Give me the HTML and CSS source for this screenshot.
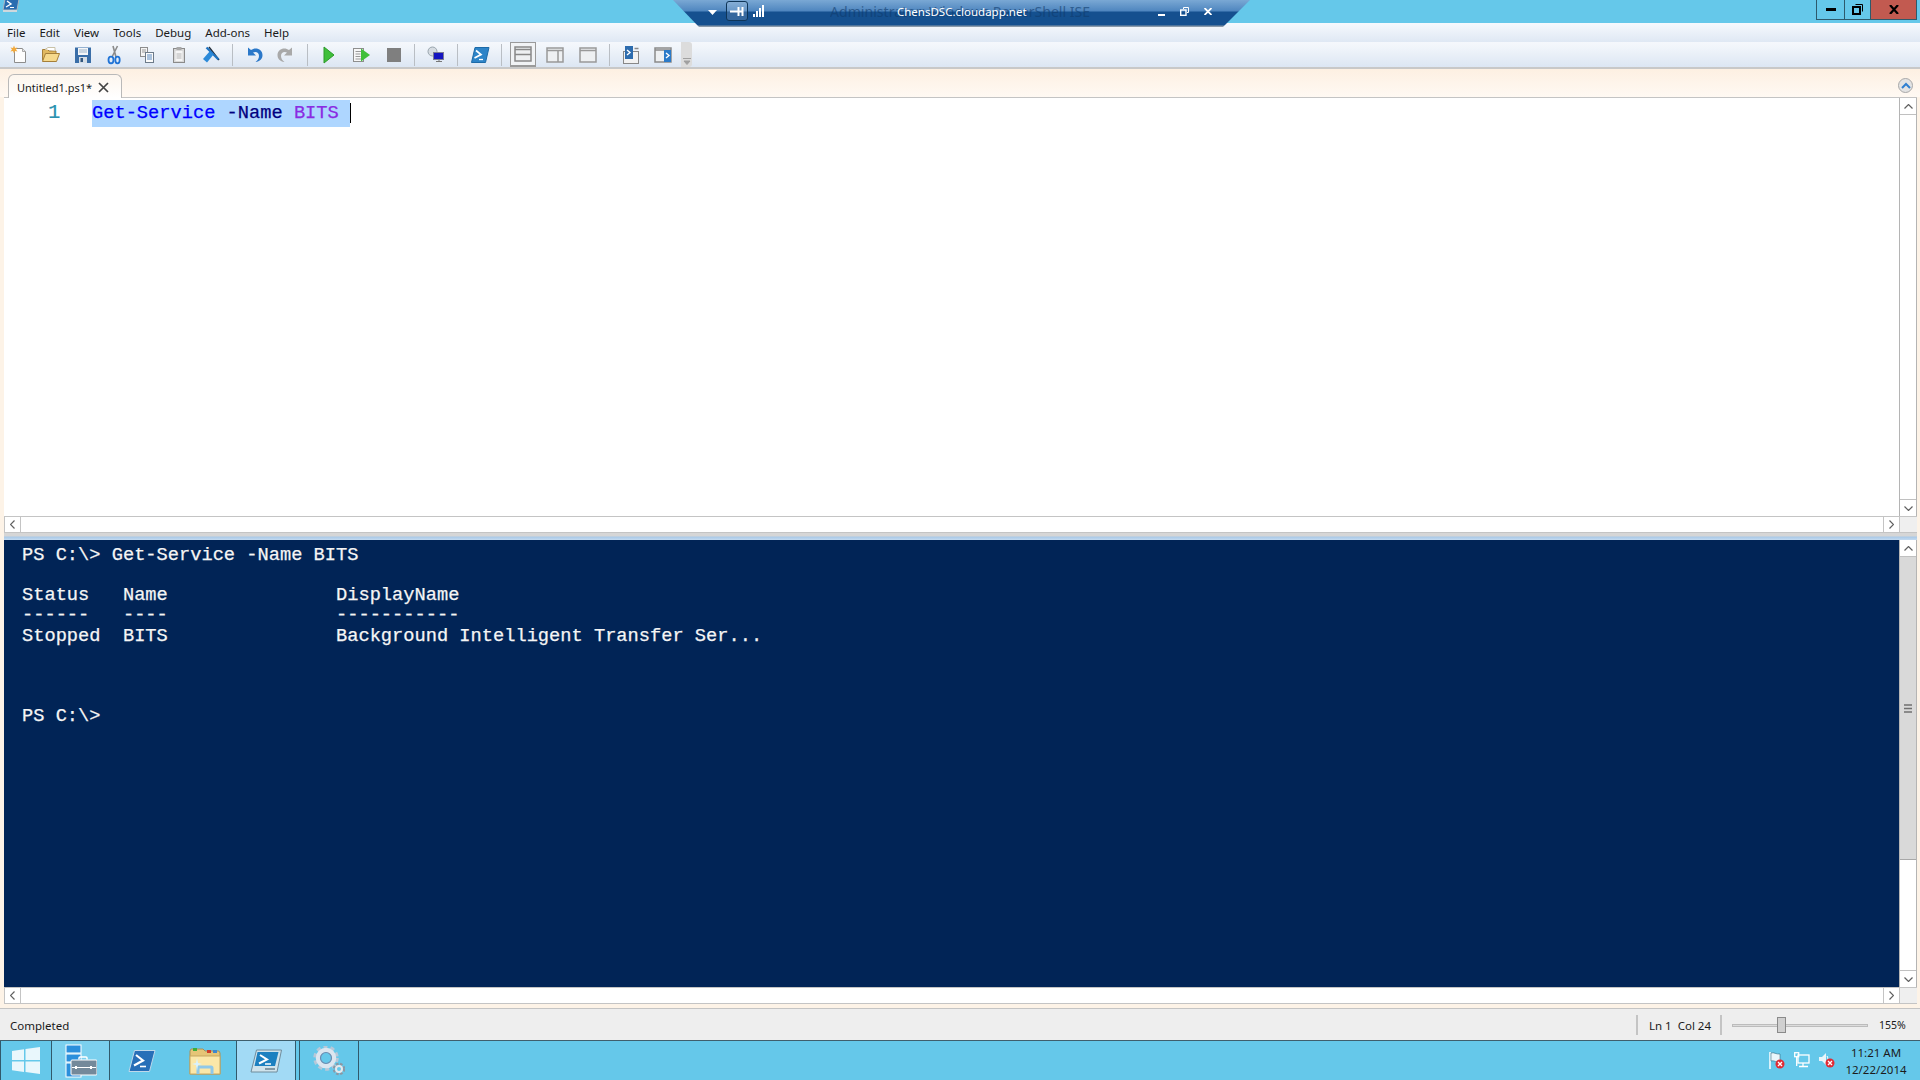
FILE: index.html
```html
<!DOCTYPE html>
<html lang="en">
<head>
<meta charset="utf-8">
<title>Windows PowerShell ISE</title>
<link rel="stylesheet" href="styles.css">
</head>
<body>
<div class="window">
  <header class="titlebar">
    <svg class="app-icon" width="18" height="15" viewBox="0 0 18 15"><path d="M3 1h14l-2 11H1z" fill="#2a6db0" stroke="#a9b6c0"/><path d="M5 3l4 3-5 3" fill="none" stroke="#fff" stroke-width="1.4"/><path d="M8 9.500h4" stroke="#fff"/><rect x="1" y="12" width="14" height="2" fill="#cfd8dd"/></svg>
    <div class="win-controls">
      <div class="win-btn min"><svg width="10" height="3"><rect width="10" height="3" fill="#000"/></svg></div>
      <div class="win-btn restore"><svg width="11" height="11" viewBox="0 0 11 11"><path d="M3.500.500h7v7" fill="none" stroke="#000"/><rect x="1" y="3" width="7" height="7" fill="none" stroke="#000" stroke-width="2"/></svg></div>
      <div class="win-btn close"><svg width="10" height="9" viewBox="0 0 10 9"><path d="M1 0l8 9M9 0L1 9" stroke="#000" stroke-width="2.200"/></svg></div>
    </div>
  </header>

  <div class="connbar">
    <span class="conn-ghost">Administrator: Windows PowerShell ISE</span>
    <svg class="conn-drop" width="9" height="5"><path d="M0 0h9L4.500 5z" fill="#fff"/></svg>
    <div class="conn-pin"><svg width="15" height="11" viewBox="0 0 15 11"><path d="M0 5.500h8M8.500 1v9M12.500 1v9M8 5.500h5" stroke="#fff" stroke-width="2"/></svg></div>
    <svg class="conn-signal" width="11" height="12" viewBox="0 0 11 12"><path d="M0 9h2v3H0zM3 6h2v6H3zM6 3h2v9H6zM9 0h2v12H9z" fill="#fff"/></svg>
    <span class="conn-name">ChensDSC.cloudapp.net</span>
    <svg class="conn-min" width="7" height="2"><rect width="7" height="2" fill="#fff"/></svg>
    <svg class="conn-restore" width="9" height="9" viewBox="0 0 9 9"><path d="M3.500 2V.500h5v5H7" fill="none" stroke="#fff"/><rect x=".7" y="3" width="5.300" height="5.300" fill="none" stroke="#fff" stroke-width="1.400"/></svg>
    <svg class="conn-close" width="8" height="7" viewBox="0 0 8 7"><path d="M.5 0l7 7M7.500 0l-7 7" stroke="#fff" stroke-width="1.800"/></svg>
  </div>

  <nav class="menubar">
    <span class="menu-item">File</span><span class="menu-item">Edit</span><span class="menu-item">View</span><span class="menu-item">Tools</span><span class="menu-item">Debug</span><span class="menu-item">Add-ons</span><span class="menu-item">Help</span>
  </nav>

  <div class="toolbar">
    <div class="tool"><svg width="20" height="20" viewBox="0 0 20 20"><path d="M5.500 3.500h8l3 3v11h-11z" fill="#fdfdfd" stroke="#8d8d8d"/><path d="M13.500 3.500v3h3" fill="#e4e4e4" stroke="#a8a8a8"/><path d="M5 .5l1 2.500 2.500-.5-1.500 2 1.500 2-2.500-.5-1 2.500-1-2.500-2.500.5 1.500-2-1.500-2 2.500.5z" fill="#f2a93b"/></svg></div>
    <div class="tool"><svg width="20" height="20" viewBox="0 0 20 20"><path d="M1.500 15.500v-11h5l1.500 1.500h7v2" fill="#e0b860" stroke="#a57f3a"/><path d="M1.500 16.500l3-8h14l-3 8z" fill="#f6d98c" stroke="#a57f3a"/><path d="M4 4.500l3-2h7v3" fill="#fff" stroke="#c9c2a8"/></svg></div>
    <div class="tool"><svg width="20" height="20" viewBox="0 0 20 20"><path d="M2 2.500h16v15.500H2z" fill="#3a6ea8"/><rect x="5" y="3" width="10" height="7" fill="#f4f6f8"/><path d="M6 5h8M6 7h8" stroke="#9fb4c8"/><rect x="6" y="12" width="8" height="6" fill="#d5dde5"/><rect x="7.500" y="13" width="2.500" height="4" fill="#33577f"/></svg></div>
    <div class="tool"><svg width="20" height="20" viewBox="0 0 20 20"><path d="M12.500 1L7 12M8 1l3 11" stroke="#8b8b8b" stroke-width="1.600" fill="none"/><ellipse cx="6" cy="15" rx="2.500" ry="3.300" fill="none" stroke="#1f73d6" stroke-width="1.800"/><ellipse cx="12.500" cy="15" rx="2.200" ry="3.300" fill="none" stroke="#1f73d6" stroke-width="1.800"/></svg></div>
    <div class="tool"><svg width="20" height="20" viewBox="0 0 20 20"><rect x="3.500" y="2.500" width="7" height="9" fill="#f4f4f4" stroke="#8d8d8d"/><path d="M5 5h4M5 7h4" stroke="#999"/><rect x="8.500" y="7.500" width="8" height="10" fill="#fbfbfb" stroke="#6d7b8a"/><path d="M10 10h5M10 12h5M10 14h5" stroke="#5b8ac0"/></svg></div>
    <div class="tool"><svg width="20" height="20" viewBox="0 0 20 20"><rect x="4.500" y="3.500" width="11" height="14" fill="#d8d8d8" stroke="#8a8a8a"/><rect x="6.500" y="6" width="7" height="10" fill="#f5f5f5"/><rect x="7.500" y="2" width="5" height="3" fill="#a8a8a8"/><path d="M7.500 9h5M7.500 11h5M7.500 13h5" stroke="#b5b5b5"/></svg></div>
    <div class="tool"><svg width="20" height="20" viewBox="0 0 20 20"><path d="M8 2l10 13" stroke="#222c38" stroke-width="1.400"/><path d="M5.500 2.500l12 12" stroke="#1f73c0" stroke-width="2.300"/><path d="M9 6l-7 8 4 3.500 6.500-8z" fill="#2b8ad9"/></svg></div>
    <div class="tsep"></div>
    <div class="tool"><svg width="20" height="20" viewBox="0 0 20 20"><path d="M4 2.500v8h8L9 7.500c3-1.500 6 0 6 3.500 0 2.500-1.500 4.500-3.500 6 4.500-.5 7-3 7-7 0-6-7-8.500-11.500-5L4 2.500z" fill="#2b78c9"/></svg></div>
    <div class="tool"><svg width="20" height="20" viewBox="0 0 20 20"><path d="M16 2.500v8H8l3-3c-3-1.500-6 0-6 3.500 0 2.500 1.500 4.500 3.500 6-4.500-.5-7-3-7-7 0-6 7-8.500 11.500-5z" fill="#a9a9a9"/></svg></div>
    <div class="tsep"></div>
    <div class="tool"><svg width="20" height="20" viewBox="0 0 20 20"><path d="M5 2l10 8-10 8z" fill="#3fbf3a" stroke="#2c9a2a"/></svg></div>
    <div class="tool"><svg width="20" height="20" viewBox="0 0 20 20"><rect x="2.500" y="3.500" width="10" height="13" fill="#f7f7f7" stroke="#8f8f8f"/><path d="M4.500 6.500h6M4.500 9h5M4.500 11.500h5M4.500 14h6" stroke="#999"/><path d="M10 3.500l9 6.500-9 6.500z" fill="#3fbf3a"/></svg></div>
    <div class="tool"><svg width="20" height="20" viewBox="0 0 20 20"><rect x="4" y="3" width="14" height="14" fill="#7f7f7f"/></svg></div>
    <div class="tsep"></div>
    <div class="tool"><svg width="20" height="20" viewBox="0 0 20 20"><circle cx="6.500" cy="6.500" r="4.500" fill="#d6dce2" stroke="#98a4ad"/><rect x="7.500" y="7.500" width="10" height="7" fill="#1414c0" stroke="#7c7c94"/><path d="M10 16.500h6M13 15v2" stroke="#777"/></svg></div>
    <div class="tsep"></div>
    <div class="tool shifted"><svg width="20" height="20" viewBox="0 0 20 20"><path d="M5 2.500h14l-3.500 15H1.500z" fill="#2d84c8" stroke="#1c6aa8"/><path d="M6 5.500l5 4-6.500 3.500" fill="none" stroke="#fff" stroke-width="1.700"/><path d="M9 14.500h4" stroke="#fff" stroke-width="1.300"/></svg></div>
    <div class="tsep"></div>
    <div class="tool selected"><svg width="18" height="16" viewBox="0 0 18 16"><rect x="1" y="1" width="16" height="14" fill="#eef0f2" stroke="#888" stroke-width="1.500"/><path d="M1 3.500h16M1 8.500h16" stroke="#888" stroke-width="1.500"/></svg></div>
    <div class="tool"><svg width="18" height="16" viewBox="0 0 18 16"><rect x="1" y="1" width="16" height="14" fill="#eef0f2" stroke="#999" stroke-width="1.500"/><path d="M1 3.500h16M12 3v12" stroke="#999" stroke-width="1.500"/></svg></div>
    <div class="tool wide"><svg width="18" height="16" viewBox="0 0 18 16"><rect x="1" y="1" width="16" height="14" fill="#eef0f2" stroke="#999" stroke-width="1.500"/><path d="M1 3.500h16" stroke="#999" stroke-width="1.500"/></svg></div>
    <div class="tsep"></div>
    <div class="tool"><svg width="18" height="20" viewBox="0 0 18 20"><rect x="1.500" y="6.500" width="15" height="12" fill="#f2f2f2" stroke="#888"/><rect x="3" y="1" width="8" height="13" fill="#2d6cae"/><path d="M5 5l3 2.500-3 2.500" fill="none" stroke="#fff" stroke-width="1.400"/><path d="M12.500 3.500h4" stroke="#888" stroke-width="1.500"/></svg></div>
    <div class="tool"><svg width="18" height="16" viewBox="0 0 18 16"><rect x="1" y="1" width="16" height="14" fill="#eef0f2" stroke="#8a8a8a" stroke-width="1.500"/><path d="M1 3h16" stroke="#8a8a8a" stroke-width="1.500"/><rect x="10" y="3" width="7" height="12" fill="#2b7ac8"/><path d="M12 6l3 2.500-3 2.500" fill="none" stroke="#fff" stroke-width="1.400"/></svg></div>
    <div class="overflow"><svg width="8" height="8" viewBox="0 0 8 8"><path d="M0 1.500h8M1 4h6l-3 3.500z" stroke="#a0a0a0" fill="#a0a0a0"/></svg></div>
  </div>

  <div class="tabstrip">
    <div class="tab"><span>Untitled1.ps1*</span><svg width="11" height="11" viewBox="0 0 11 11"><path d="M1 1l9 9M10 1l-9 9" stroke="#444" stroke-width="1.700"/></svg></div>
    <div class="collapse"><svg width="10" height="7" viewBox="0 0 10 7"><path d="M1 6l4-4 4 4" fill="none" stroke="#2f7fd1" stroke-width="2"/></svg></div>
  </div>

  <main class="panes">
    <section class="pane editor-pane">
      <div class="pane-body">
        <div class="editor">
          <span class="gutter">1</span>
          <pre class="code"><span class="sel"><span class="cmd">Get-Service</span> <span class="param">-Name</span> <span class="arg">BITS</span> </span><span class="caret"></span></pre>
        </div>
        <div class="vscroll">
          <div class="sb-btn"><svg width="9" height="5" viewBox="0 0 9 5"><path d="M.5 4.500l4-4 4 4" fill="none" stroke="#606060" stroke-width="1.200"/></svg></div>
          <div class="sb-track"></div>
          <div class="sb-btn"><svg width="9" height="5" viewBox="0 0 9 5"><path d="M.5.500l4 4 4-4" fill="none" stroke="#606060" stroke-width="1.200"/></svg></div>
        </div>
      </div>
      <div class="hscroll">
        <div class="hs-btn"><svg width="5" height="9" viewBox="0 0 5 9"><path d="M4.500.5l-4 4 4 4" fill="none" stroke="#606060" stroke-width="1.200"/></svg></div>
        <div class="hs-track"></div>
        <div class="hs-btn"><svg width="5" height="9" viewBox="0 0 5 9"><path d="M.5.5l4 4-4 4" fill="none" stroke="#606060" stroke-width="1.200"/></svg></div>
        <div class="hs-corner"></div>
      </div>
    </section>
    <div class="splitter"></div>
    <section class="pane console-pane">
      <div class="pane-body">
        <pre class="console">PS C:\&gt; Get-Service -Name BITS

Status   Name               DisplayName
------   ----               -----------
Stopped  BITS               Background Intelligent Transfer Ser...



PS C:\&gt;</pre>
        <div class="vscroll">
          <div class="sb-btn"><svg width="9" height="5" viewBox="0 0 9 5"><path d="M.5 4.500l4-4 4 4" fill="none" stroke="#606060" stroke-width="1.200"/></svg></div>
          <div class="sb-thumb"><svg width="8" height="9" viewBox="0 0 8 9"><path d="M0 1h8M0 4.500h8M0 8h8" stroke="#707070" stroke-width="1.500"/></svg></div>
          <div class="sb-track"></div>
          <div class="sb-btn"><svg width="9" height="5" viewBox="0 0 9 5"><path d="M.5.500l4 4 4-4" fill="none" stroke="#606060" stroke-width="1.200"/></svg></div>
        </div>
      </div>
      <div class="hscroll">
        <div class="hs-btn"><svg width="5" height="9" viewBox="0 0 5 9"><path d="M4.500.5l-4 4 4 4" fill="none" stroke="#606060" stroke-width="1.200"/></svg></div>
        <div class="hs-track"></div>
        <div class="hs-btn"><svg width="5" height="9" viewBox="0 0 5 9"><path d="M.5.5l4 4-4 4" fill="none" stroke="#606060" stroke-width="1.200"/></svg></div>
        <div class="hs-corner"></div>
      </div>
    </section>
  </main>

  <footer class="statusbar">
    <span class="status-text">Completed</span>
    <span class="status-pos">Ln 1&nbsp; Col 24</span>
    <div class="slider"><div class="slider-thumb"></div></div>
    <span class="zoom-text">155%</span>
  </footer>

  <div class="taskbar">
    <div class="task start"><svg width="28" height="27" viewBox="0 0 28 27"><path d="M0 4l12-1.700V13H0zM13.500 2L28 0v13H13.500zM0 14.500h12v10.400L0 23.300zM13.500 14.500H28V27l-14.500-2z" fill="#e9f7fc"/></svg></div>
    <div class="task server"><svg width="32" height="34" viewBox="0 0 32 34"><rect x="1" y="1" width="15" height="8" fill="#2a8fdc" stroke="#fff"/><rect x="1" y="10" width="15" height="8" fill="#2a8fdc" stroke="#fff"/><rect x="1" y="19" width="15" height="14" fill="#2a8fdc" stroke="#fff"/><path d="M14 15.500v-1.500a1 1 0 0 1 1-1h6a1 1 0 0 1 1 1v1.500" fill="none" stroke="#fff" stroke-width="1.500"/><rect x="6" y="16" width="26" height="15" rx="1" fill="#74899a" stroke="#fff"/><path d="M7 23.500h24" stroke="#fff"/><rect x="10" y="22" width="2" height="3" fill="#fff"/><rect x="25" y="22" width="2" height="3" fill="#fff"/></svg></div>
    <div class="task ps"><svg width="28" height="24" viewBox="0 0 28 24"><path d="M6.500 1.500H27l-5.500 21H1z" fill="#276fb8" stroke="#bfd8ea"/><path d="M8 6l7 5.500-9 5" fill="none" stroke="#fff" stroke-width="2.200"/><path d="M12 17.500h6" stroke="#fff" stroke-width="1.600"/></svg></div>
    <div class="task explorer"><svg width="32" height="28" viewBox="0 0 32 28"><path d="M1 27V4l1-2h12l2 2h14l1 2v21z" fill="#e5c576" stroke="#a7905a"/><rect x="4" y="1" width="4" height="3" fill="#3cae3c"/><rect x="18" y="3" width="4" height="3" fill="#cf3c2a"/><rect x="24" y="3" width="4" height="3" fill="#3d87cf"/><rect x="1" y="9" width="30" height="18" fill="#fbe7a8" stroke="#c6a860"/><path d="M9 27v-6a1 1 0 0 1 1-1h12a1 1 0 0 1 1 1v6" fill="none" stroke="#8fc8e8" stroke-width="3"/><path d="M8 11l1 5 4 1-4 1-1 6-1-6-4-1 4-1z" fill="#d8f2ff"/></svg></div>
    <div class="task active"><svg width="32" height="24" viewBox="0 0 32 24"><path d="M6.500 1h25L27 23H1z" fill="#cfe3ec" stroke="#6f8c9c"/><path d="M7.500 3h21L25 17H4.500z" fill="#1c80c0"/><path d="M10 6l7 4.500-8 4" fill="none" stroke="#fff" stroke-width="2"/><path d="M15 15h6" stroke="#fff" stroke-width="1.500"/><path d="M15 20h10" stroke="#8299a5" stroke-width="2"/></svg></div>
    <div class="task gears"><svg width="32" height="30" viewBox="0 0 32 30"><g fill="none"><circle cx="13" cy="12" r="11" stroke-width="3.500" stroke-dasharray="4 3" stroke="#b7c8d8"/><circle cx="13" cy="12" r="8" stroke-width="4.500" stroke="#dbe6f0"/><circle cx="13" cy="12" r="5.500" stroke-width="1.200" stroke="#6d8cb0"/><circle cx="26" cy="23" r="5" stroke-width="2.500" stroke-dasharray="2.500 1.500" stroke="#8a98a5"/><circle cx="26" cy="23" r="3" stroke-width="2" stroke="#e4e9ee"/></g></svg></div>
    <div class="tray">
      <svg width="16" height="17" viewBox="0 0 16 17"><path d="M1 0v17" stroke="#fff" stroke-width="1.500"/><path d="M2 1c3-1 5 1.500 9 1v8c-4 .5-6-2-9-1z" fill="#eaf6fb" stroke="#20556b" stroke-width=".5"/><circle cx="11" cy="12" r="4.500" fill="#e02b35"/><path d="M9 10l4 4M13 10l-4 4" stroke="#fff" stroke-width="1.300"/></svg>
      <svg width="16" height="17" viewBox="0 0 16 17"><rect x=".7" y=".7" width="4" height="4" fill="none" stroke="#fff" stroke-width="1.300"/><path d="M2.700 5v9" stroke="#fff" stroke-width="1.300"/><rect x="4" y="3" width="11" height="8" fill="none" stroke="#fff" stroke-width="1.300"/><path d="M9 11v3M5 14.500h9" stroke="#fff" stroke-width="1.300"/></svg>
      <svg width="16" height="17" viewBox="0 0 16 17"><path d="M0 5h3l4-4v12L3 9H0z" fill="#eaf6fb"/><path d="M8 4c1 1.500 1 3 .5 4" stroke="#fff" fill="none"/><circle cx="11" cy="11" r="4.500" fill="#e02b35"/><path d="M9 9l4 4M13 9l-4 4" stroke="#fff" stroke-width="1.300"/></svg>
      <div class="clock"><span>11:21 AM</span><span>12/22/2014</span></div>
    </div>
  </div>
</div>
</body>
</html>
```

FILE: styles.css
```css
* { box-sizing: border-box; }
html, body { margin: 0; padding: 0; height: 100%; overflow: hidden; }
body { font-family: "Noto Sans", "Open Sans", sans-serif; font-size: 11.500px; color: #1a1a1a; }

.window { position: relative; display: flex; flex-direction: column; width: 1920px; height: 1080px; background: #fdf3e7; }

/* title bar */
.titlebar { display: flex; align-items: center; justify-content: space-between; height: 23px; flex: none; background: #65c8ea; padding-left: 2px; }
.app-icon { margin-top: -13px; }
.win-controls { display: flex; align-self: flex-start; height: 20px; margin-right: 3px; border: 1px solid #2d5a6c; border-top: 0; }
.win-btn { display: flex; align-items: center; justify-content: center; height: 19px; }
.win-btn.min { width: 28px; border-right: 1px solid #2d5a6c; }
.win-btn.restore { width: 26px; border-right: 1px solid #2d5a6c; }
.win-btn.close { width: 45px; background: #c25a50; }

/* remote connection bar, floats over the title bar */
.connbar { position: absolute; left: 673px; top: 0; width: 577px; height: 27px; color: #fff; background: linear-gradient(#7aa8d4 0, #4f86bf 11px, #15508f 12px, #15508f 25px, #8a9aaa 26px); clip-path: polygon(0 0, 100% 0, 550px 27px, 26px 27px); }
.conn-ghost { position: absolute; left: 157px; top: 2px; color: #0f3b6d; font-size: 14.100px; white-space: nowrap; opacity: .6; line-height: 20px; }
.conn-name { position: absolute; left: 224px; top: 4px; font-size: 11.500px; line-height: 16px; white-space: nowrap; }
.conn-drop { position: absolute; left: 35px; top: 10px; }
.conn-pin { position: absolute; left: 53px; top: 1px; display: flex; align-items: center; justify-content: center; width: 22px; height: 20px; border: 1px solid #0e3558; border-radius: 3px; background: rgba(255,255,255,.14); }
.conn-signal { position: absolute; left: 80px; top: 5px; }
.conn-min { position: absolute; left: 485px; top: 14px; }
.conn-restore { position: absolute; left: 507px; top: 7px; }
.conn-close { position: absolute; left: 531px; top: 8px; }

/* menu */
.menubar { display: flex; flex: none; align-items: center; height: 19px; background: linear-gradient(#f6f9fd, #dfe8f4); }
.menu-item { padding: 0 7px; line-height: 19px; }

/* toolbar */
.toolbar { display: flex; flex: none; align-items: center; height: 27px; padding-left: 3px; background: linear-gradient(#f5f8fc, #f2f6fb 4px, #dce6f3); border-bottom: 2px solid #c8c8c8; }
.tool { display: flex; align-items: center; justify-content: center; width: 32px; height: 25px; }
.tool.wide { width: 33px; }
.tool.shifted { margin-left: 1px; }
.tool.selected { width: 26px; margin: 0 3px; background: #f1f3f5; border: 1px solid #9a9a9a; border-bottom-width: 2px; }
.tsep { flex: none; width: 1px; height: 22px; margin: 0 5px; background: #b9bec4; }
.overflow { display: flex; align-items: flex-end; justify-content: center; width: 11px; height: 25px; margin-left: 2px; padding-bottom: 2px; background: #dcdcdc; border-radius: 0 3px 3px 0; }

/* tab strip */
.tabstrip { display: flex; flex: none; align-items: flex-end; justify-content: space-between; height: 28px; padding: 0 8px 0 8px; background: linear-gradient(#fdf0e2, #fff9f3); }
.tab { display: flex; align-items: center; gap: 6px; width: 114px; height: 24px; padding: 2px 0 0 8px; background: linear-gradient(#fdf6ee, #fff); border: 1px solid #b9b9b9; border-bottom: 0; border-radius: 6px 6px 0 0; font-size: 11px; margin-bottom: -1px; position: relative; z-index: 1; }
.collapse { display: flex; align-items: center; justify-content: center; align-self: center; width: 15px; height: 15px; margin-top: 5px; margin-right: -1px; border-radius: 50%; background: #e3e3e3; border: 1px solid #a8a8a8; }

/* panes */
.panes { display: flex; flex-direction: column; flex: none; height: 912px; padding: 0 3px 0 4px; border-bottom: 1px solid #c4c4c4; }
.pane { display: flex; flex-direction: column; }
.editor-pane { height: 436px; flex: none; border-top: 1px solid #c4c4c4; }
.console-pane { flex: 1; min-height: 0; padding-bottom: 4px; }
.pane-body { display: flex; flex: 1; min-height: 0; }

.editor { flex: 1; display: flex; background: #fff; }
.gutter { width: 88px; padding: 3px 0 0 44px; font: 20.500px/24px "Liberation Mono", monospace; color: #2b91af; -webkit-text-stroke: .2px #2b91af; }
.code { margin: 2px 0 0; font: 18.700px/27px "Liberation Mono", monospace; display: flex; height: 27px; -webkit-text-stroke: .25px; }
.sel { background: #aed6ff; white-space: pre; display: block; }
.cmd { color: #0000ff; }
.param { color: #000080; }
.arg { color: #8a2be2; }
.caret { width: 1px; height: 20px; margin-top: 3px; background: #000; }

.vscroll { display: flex; flex-direction: column; flex: none; width: 18px; margin-left: 0; background: #fff; border-left: 1px solid #b4b4b4; border-right: 1px solid #b4b4b4; }
.sb-btn { display: flex; align-items: center; justify-content: center; flex: none; height: 17px; background: #fff; border-bottom: 1px solid #c0c0c0; }
.sb-btn:last-child { border-bottom: 0; border-top: 1px solid #c0c0c0; }
.sb-track { flex: 1; }
.sb-thumb { display: flex; align-items: center; justify-content: center; flex: none; height: 303px; background: #d9d9d9; border-bottom: 1px solid #a8a8a8; }

.hscroll { display: flex; flex: none; height: 17px; background: #fff; border-top: 1px solid #c4c4c4; border-bottom: 1px solid #c4c4c4; border-left: 1px solid #c4c4c4; }
.hs-btn { display: flex; align-items: center; justify-content: center; flex: none; width: 16px; border-right: 1px solid #c4c4c4; }
.hs-track { flex: 1; }
.hs-track + .hs-btn { border-left: 1px solid #c4c4c4; border-right: 0; }
.hs-corner { flex: none; width: 18px; background: #efefef; border-left: 1px solid #c4c4c4; }

.splitter { flex: none; height: 7px; background: linear-gradient(#d6d6d6 0, #d6d6d6 3px, #a9c9e8 4px, #c4daef 7px); }

.console { flex: 1; margin: 0; padding: 5px 0 0 18px; background: #012456; color: #f5f5f5; font: 18.700px/20.150px "Liberation Mono", monospace; -webkit-text-stroke: .25px #f5f5f5; }

/* status bar */
.statusbar { display: flex; flex: none; align-items: center; height: 31px; padding: 1px 15px 0 10px; background: #eeeeee; color: #1a1a1a; font-size: 11.500px; }
.status-text { flex: 1; }
.status-pos { display: flex; align-items: center; height: 20px; width: 86px; padding-left: 11px; border-left: 2px solid #c4c4c4; border-right: 2px solid #c4c4c4; white-space: nowrap; }
.slider { position: relative; width: 136px; height: 3px; margin: 0 11px 0 10px; background: #dcdcdc; border: 1px solid #bcbcbc; }
.slider-thumb { position: absolute; left: 44px; top: -8px; width: 9px; height: 16px; background: #d0d0d0; border: 1px solid #8a8a8a; }
.zoom-text { width: 26px; font-size: 10.500px; white-space: nowrap; }

/* taskbar */
.taskbar { display: flex; flex: none; align-items: center; height: 40px; background: #65c8ea; border-top: 1px solid #3f5f6d; padding-right: 14px; }
.task { display: flex; align-items: center; justify-content: center; height: 39px; border-right: 1px solid #31596b; }
.task.start { width: 52px; border-left: 1px solid #31596b; }
.task.server { width: 58px; background: #7bd0ee; }
.task.ps { width: 64px; border-right: 0; }
.task.explorer { width: 63px; }
.task.active { width: 59px; background: #a2daf5; }
.task.gears { width: 60px; margin-left: 3px; border-left: 1px solid #31596b; }
.tray { display: flex; align-items: center; gap: 9px; margin-left: auto; }
.clock { display: flex; flex-direction: column; align-items: center; width: 60px; margin-left: 2px; line-height: 17px; color: #1c1c1c; font-size: 11.500px; }
```
